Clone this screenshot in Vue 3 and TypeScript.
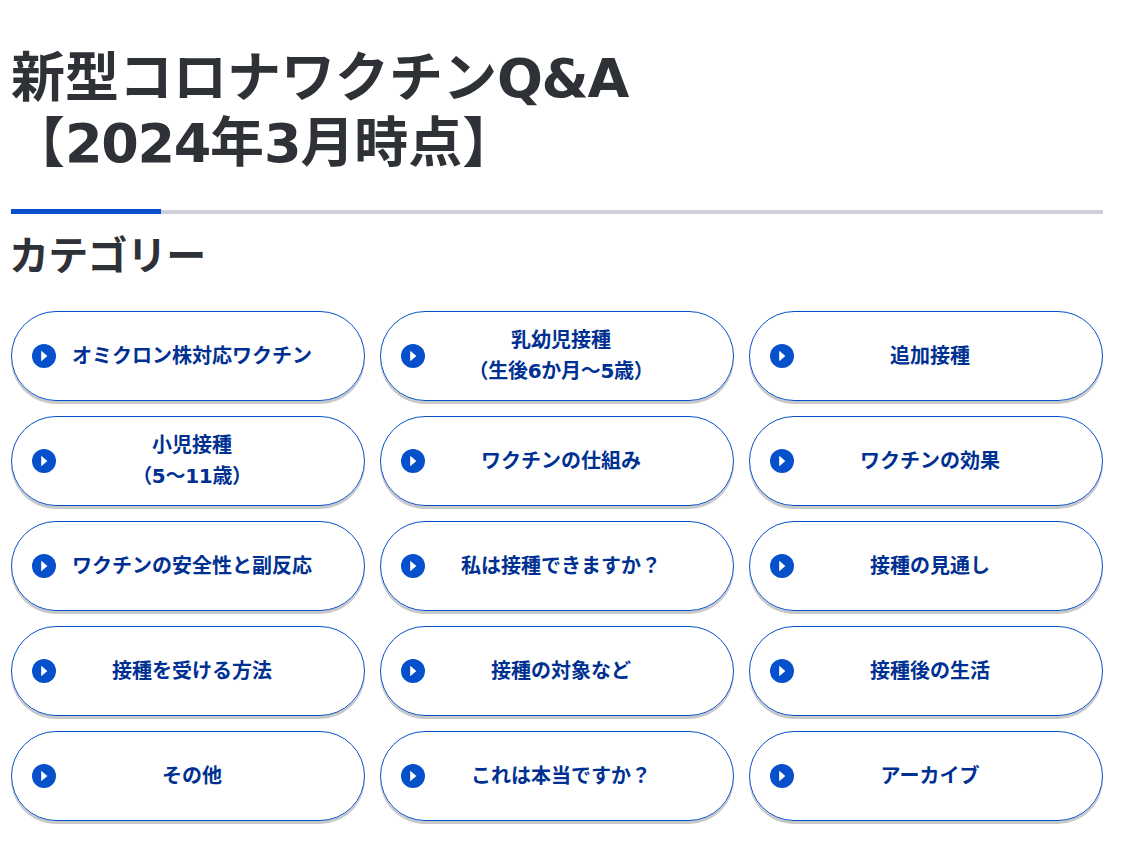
<script setup lang="ts">
interface Category {
  id: string
  lines: string[]
}

const categories: Category[] = [
  { id: 'omicron', lines: ['オミクロン株対応ワクチン'] },
  { id: 'infant', lines: ['乳幼児接種', '（生後6か月～5歳）'] },
  { id: 'booster', lines: ['追加接種'] },
  { id: 'child', lines: ['小児接種', '（5～11歳）'] },
  { id: 'mechanism', lines: ['ワクチンの仕組み'] },
  { id: 'effect', lines: ['ワクチンの効果'] },
  { id: 'safety', lines: ['ワクチンの安全性と副反応'] },
  { id: 'eligible', lines: ['私は接種できますか？'] },
  { id: 'outlook', lines: ['接種の見通し'] },
  { id: 'howto', lines: ['接種を受ける方法'] },
  { id: 'target', lines: ['接種の対象など'] },
  { id: 'after', lines: ['接種後の生活'] },
  { id: 'other', lines: ['その他'] },
  { id: 'rumor', lines: ['これは本当ですか？'] },
  { id: 'archive', lines: ['アーカイブ'] },
]
</script>

<template>
  <main class="page">
    <h1 class="title">
      <span class="title-line">新型コロナワクチン<span class="latin">Q&amp;A</span></span>
      <span class="title-line">【<span class="latin">2024</span>年<span class="latin">3</span>月時点】</span>
    </h1>
    <div class="divider"><span class="divider-accent"></span></div>
    <h2 class="subtitle">カテゴリー</h2>
    <ul class="category-list">
      <li v-for="category in categories" :key="category.id">
        <a class="category" :href="`#${category.id}`">
          <svg class="icon" viewBox="0 0 24 24" aria-hidden="true">
            <circle cx="12" cy="12" r="12" />
            <path d="M9.2 6.8 L15.4 12 L9.2 17.2 Z" />
          </svg>
          <span class="label">
            <span v-for="line in category.lines" :key="line" class="label-line">{{ line }}</span>
          </span>
        </a>
      </li>
    </ul>
  </main>
</template>

<style>
body {
  margin: 0;
  background: #fff;
}
</style>

<style scoped>
.page {
  box-sizing: border-box;
  width: 1139px;
  height: 851px;
  padding: 41px 36px 0 11px;
  overflow: hidden;
  font-family: 'Noto Sans CJK JP', sans-serif;
  font-weight: 700;
  color: #2e3136;
}

.title {
  margin: 0;
  font-size: 54px;
  line-height: 65px;
}

.title-line,
.label-line {
  display: block;
  white-space: nowrap;
}

.latin {
  font-family: 'DejaVu Sans', sans-serif;
  line-height: 1;
  letter-spacing: -1.3px;
}

.divider {
  display: flex;
  align-items: flex-end;
  height: 5px;
  margin-top: 38px;
  background: linear-gradient(#fff 1px, #cfd0dc 1px);
}

.divider-accent {
  width: 150px;
  height: 5px;
  background: #0650cc;
}

.subtitle {
  margin: 11px 0 0 -2px;
  font-size: 40px;
  line-height: 56px;
  letter-spacing: -0.7px;
}

.category-list {
  display: grid;
  grid-template-columns: repeat(3, 354px);
  gap: 15px;
  margin: 30px 0 0;
  padding: 0;
  list-style: none;
}

.category {
  display: flex;
  align-items: center;
  box-sizing: border-box;
  height: 90px;
  padding: 0 20px;
  border: 1px solid #0650cc;
  border-radius: 45px;
  box-shadow: 0 3px 0 #c8c8c8;
  font-family: 'DejaVu Sans', 'Noto Sans CJK JP', sans-serif;
  font-size: 20px;
  line-height: 31px;
  color: #003192;
  text-align: center;
  text-decoration: none;
}

.icon {
  flex: none;
  width: 24px;
  height: 24px;
}

.icon circle {
  fill: #0650cc;
}

.icon path {
  fill: #fff;
}

.label {
  flex: 1;
  margin-right: 16px;
}

.label-line + .label-line {
  letter-spacing: -0.3px;
}
</style>
